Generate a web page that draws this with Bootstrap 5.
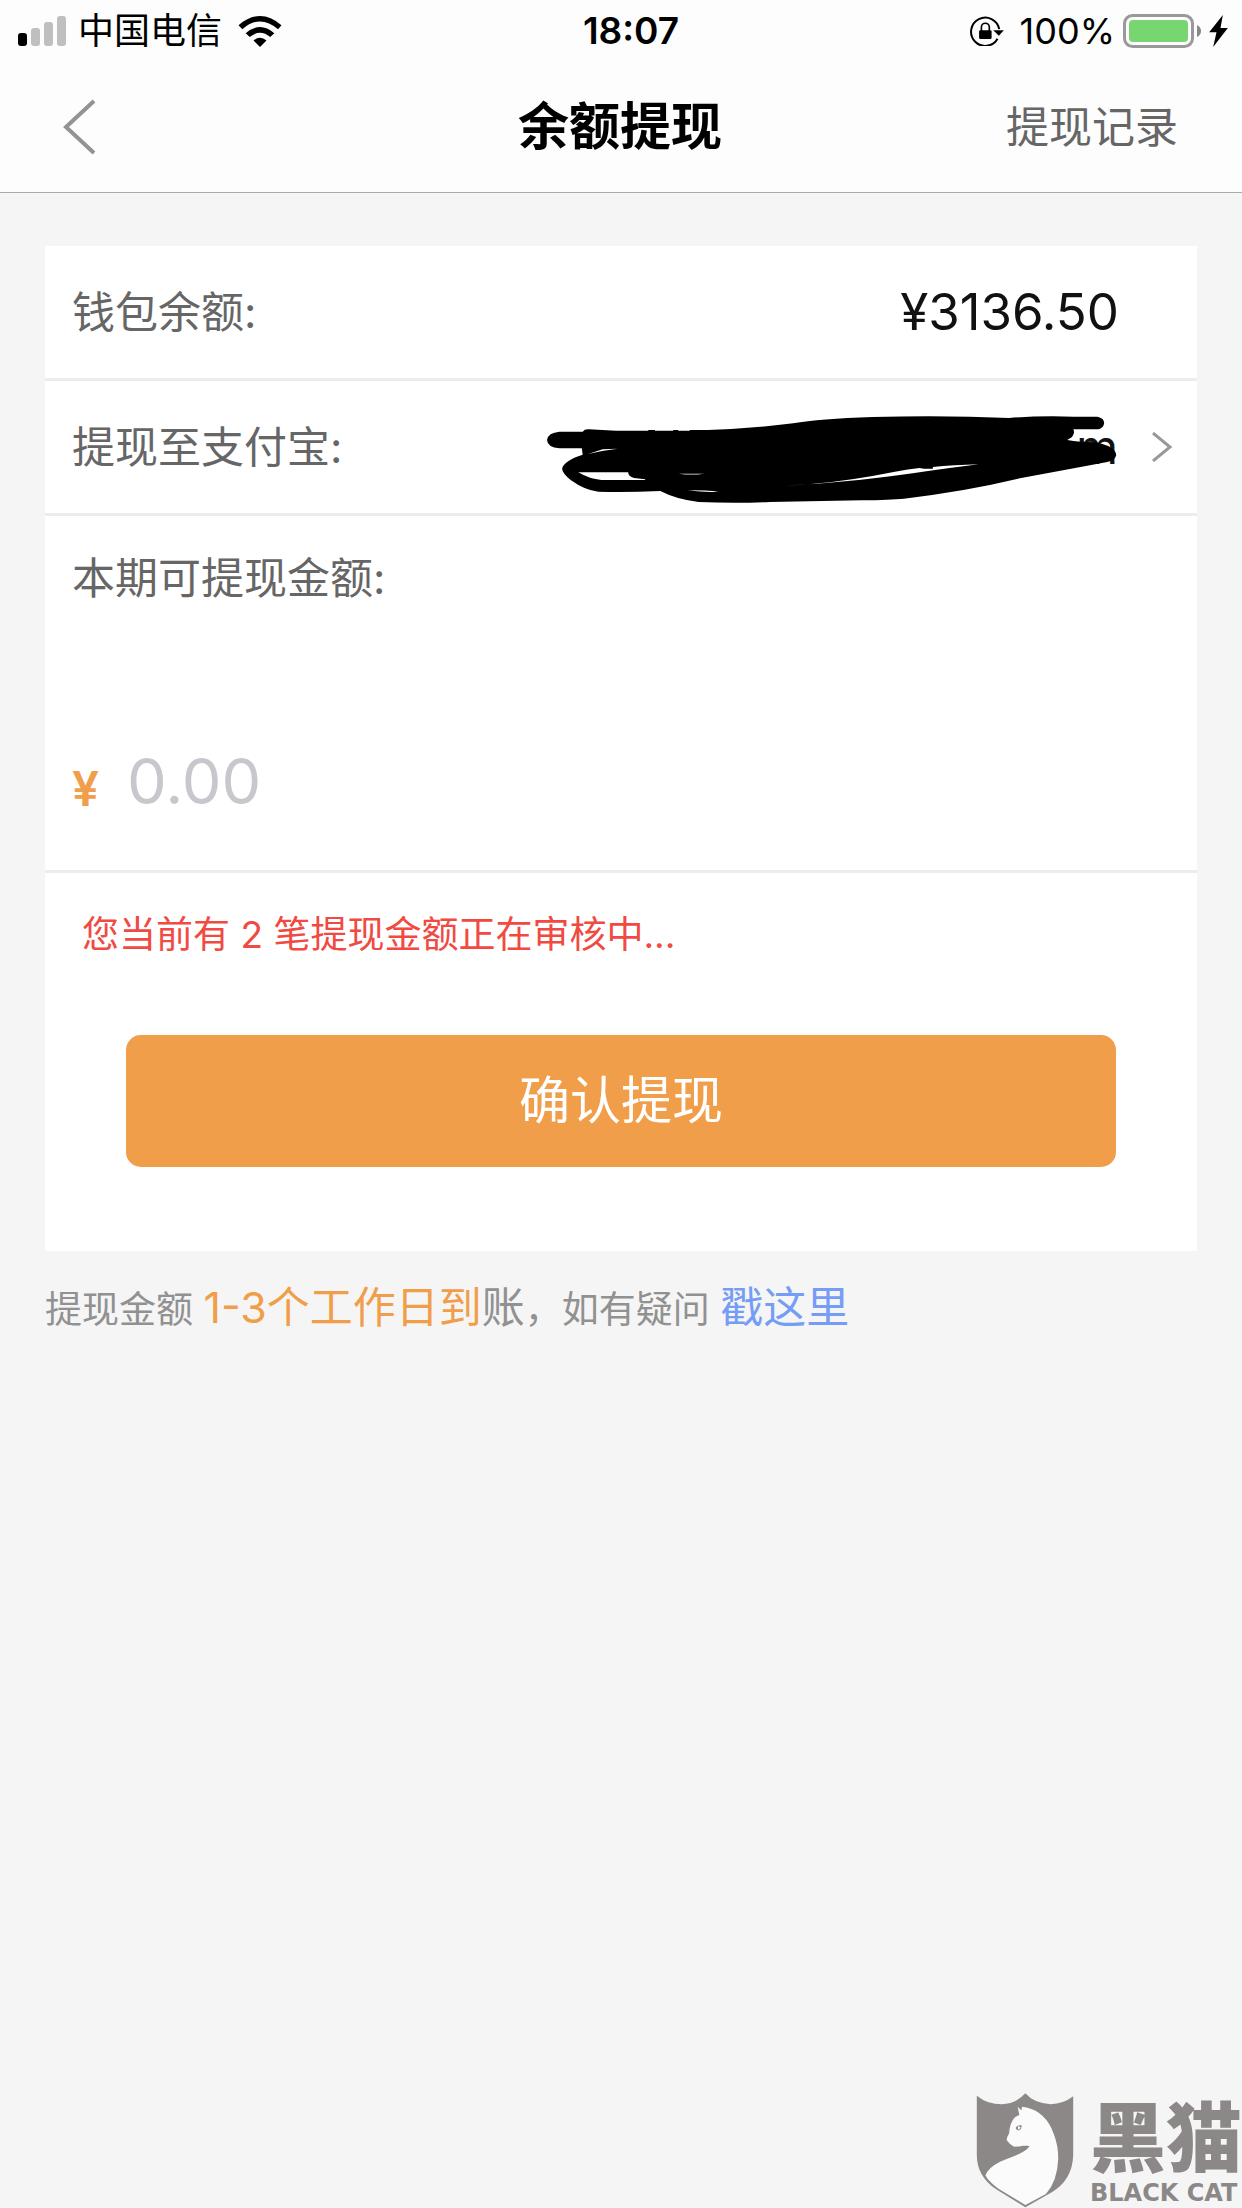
<!DOCTYPE html>
<html lang="zh-CN">
<head>
<meta charset="utf-8">
<meta name="viewport" content="width=device-width, initial-scale=1">
<title>余额提现</title>
<link href="https://cdn.jsdelivr.net/npm/bootstrap@5.3.0/dist/css/bootstrap.min.css" rel="stylesheet">
<style>
  body { font-family: Inter, "Noto Sans CJK SC", sans-serif; font-size: 43px; line-height: 60px; color: #666; background: #f5f5f5; }
  svg { display: block; flex: none; }
  a { text-decoration: none; }
  .app-head { background: #fdfdfd; border-bottom: 1px solid #aaa; }
  .status-bar { height: 62px; padding: 0 14px 0 18px; font-size: 36px; color: #000; }
  .clock { font-size: 37px; font-weight: 600; }
  .title-bar { height: 130px; padding: 0 64px 0 62px; }
  .side { flex: 1 1 0; }
  .page-title { font-size: 51px; font-weight: 600; color: #000; }
  .link-grey, .link-grey:hover { color: #666; }
  .page-main { padding: 53px 45px 0; }
  .line-item { min-height: 135px; padding: 0 24px 0 27px; border-bottom: 3px solid #ececec; }
  .sum { font-size: 51px; color: #111; padding-right: 54px; }
  .account { font-size: 48px; color: #111; padding-right: 33px; }
  .scribble { position: absolute; right: 79px; top: 34px; }
  .amount-block { padding: 32px 27px 47px; border-bottom: 3px solid #ececec; }
  .amount-line { margin-top: 131px; }
  .yen { font-size: 48px; font-weight: 600; color: #f19e4b; }
  .amount-input { font-size: 63px; line-height: 84px; height: 84px; padding: 0 0 0 4px; border: 0; background: transparent; color: #111; }
  .amount-input::placeholder { color: #c7c7cd; opacity: 1; }
  .confirm-block { padding: 32px 81px 84px; }
  .notice { font-size: 37px; color: #f04a42; margin: 0 0 70px -44px; }
  .btn-confirm, .btn-confirm:hover { height: 132px; border: 0; border-radius: 15px; background: #f19e4b; color: #fff; font-size: 51px; }
  .hint { font-size: 37px; color: #919191; margin: 26px 0 0; }
  .hint-big { font-size: 43px; }
  .orange { color: #f19e4b; }
  .hint a { color: #769df6; }
  .brand { gap: 16px; color: #8c8888; }
  .brand-cn { font-size: 76px; line-height: 84px; font-weight: 900; }
  .brand-en { font-family: "DejaVu Sans", sans-serif; font-size: 24px; line-height: 26px; font-weight: 700; padding-bottom: 2px; }
</style>
</head>
<body class="d-flex flex-column min-vh-100">
<header class="app-head">
  <div class="status-bar d-flex align-items-center">
    <div class="side d-flex align-items-center">
      <svg width="48" height="30" viewBox="0 0 48 30" aria-hidden="true"><rect y="17" width="9" height="13" rx="3"/><g fill="#bfbfbf"><rect x="13" y="12" width="9" height="18" rx="3"/><rect x="26" y="6" width="9" height="24" rx="3"/><rect x="39" width="9" height="30" rx="3"/></g></svg>
      <span class="ms-2 ps-1">中国电信</span>
      <svg class="ms-3" width="44" height="31" viewBox="720 44 126 91" aria-hidden="true"><path d="M720 71Q783 17 846 71L836 83Q783 37 731 83Z"/><path d="M741 95Q783 58 825 95L813 106Q783 81 753 106Z"/><path d="M764 116Q783 100 802 116L783 135Z"/></svg>
    </div>
    <span class="clock ps-3">18:07</span>
    <div class="side d-flex align-items-center justify-content-end">
      <svg width="34" height="30" viewBox="143 44 102 91" aria-hidden="true"><path d="M226 113A43 43 0 1 1 231 84" fill="none" stroke="#000" stroke-width="6"/><path d="M213 87H245L230 104Z"/><rect x="170" y="87" width="38" height="27" rx="4"/><path d="M177 90V78a12 12 0 0 1 24 0V90" fill="none" stroke="#000" stroke-width="5"/></svg>
      <span class="ms-3">100%</span>
      <svg class="ms-2" width="78" height="34" viewBox="0 0 78 34" aria-hidden="true"><rect x="1.500" y="1.500" width="68" height="31" rx="8" fill="none" stroke="#999" stroke-width="3"/><rect x="6" y="6" width="59" height="22" rx="4" fill="#78d672"/><path d="M74 11q4 2 4 6t-4 6z" fill="#888"/></svg>
      <svg class="ms-2" width="19" height="32" viewBox="866 44 56 96" aria-hidden="true"><path d="M907 44L866 96H888L878 140L922 83H900Z"/></svg>
    </div>
  </div>
  <nav class="title-bar d-flex align-items-center" aria-label="页面导航">
    <div class="side d-flex"><a href="#" class="d-block" aria-label="返回"><svg width="34" height="56" viewBox="0 0 34 56" fill="none" stroke="#939393" stroke-width="4"><path d="M32 2L4 28L32 54"/></svg></a></div>
    <h1 class="page-title m-0">余额提现</h1>
    <div class="side text-end"><a href="#" class="link-grey">提现记录</a></div>
  </nav>
</header>

<main class="page-main">
  <form class="bg-white" onsubmit="return false">
    <div class="line-item d-flex align-items-center justify-content-between"><span>钱包余额:</span><span class="sum">¥3136.50</span></div>
    <a href="#" class="line-item link-grey position-relative d-flex align-items-center">
      <span class="me-auto">提现至支付宝:</span>
      <span class="account">m</span>
      <svg width="22" height="30" viewBox="0 0 22 30" fill="none" stroke="#999" stroke-width="3" aria-hidden="true"><path d="M2 1L19 15L2 29"/></svg>
      <svg class="scribble" width="571" height="89" viewBox="60 75 1280 267" preserveAspectRatio="none" aria-hidden="true"><path fill-rule="evenodd" d="M88 125H140Q144 117 154 118L215 122H287V120H302V122H343V120H354V122H380V120H420Q520 116 612 100Q670 86 790 81Q950 75 1096 84Q1160 77 1240 80H1294Q1309 84 1309 100Q1307 115 1296 118H1240Q1246 138 1226 150Q1240 153 1256 155L1290 157Q1336 170 1336 196Q1333 212 1316 216Q1220 240 1120 265Q1000 304 860 326Q830 330 765 331L560 336Q480 341 400 336Q350 328 314 303Q240 307 175 305Q145 301 113 270Q93 248 94 235Q98 212 140 194L138 175H88Q61 172 60 150Q62 128 88 125ZM152 192L185 178L218 176Q185 181 152 192ZM130 247H242Q242 260 255 264L280 268V270H182Q155 267 130 247ZM355 251Q385 256 412 251Q385 252 355 251ZM376 301Q420 308 444 305Q420 301 376 301ZM590 287Q720 280 880 250Q960 234 1028 223Q970 225 925 231V236H905L895 234Q870 238 840 245Q740 272 648 283Z"/></svg>
    </a>
    <div class="amount-block">
      <label for="amount" class="d-block">本期可提现金额:</label>
      <div class="amount-line d-flex align-items-center gap-4"><span class="yen pt-3">¥</span><input id="amount" class="amount-input flex-grow-1" type="text" inputmode="decimal" placeholder="0.00"></div>
    </div>
    <div class="confirm-block">
      <p class="notice">您当前有 2 笔提现金额正在审核中...</p>
      <button type="submit" class="btn btn-confirm w-100">确认提现</button>
    </div>
  </form>
  <p class="hint">提现金额 <span class="hint-big"><span class="orange">1-3个工作日到</span>账</span>，如有疑问 <a href="#" class="hint-big">戳这里</a></p>
</main>

<footer class="brand d-flex justify-content-end align-items-end mt-auto">
  <svg width="98" height="115" viewBox="38 38 294 346" aria-hidden="true"><path fill="#8c8888" d="M40 46Q72 72 115 72Q158 70 186 39Q212 69 262 72Q300 71 330 48V225Q328 300 263 338L186 382L97 327Q40 287 40 225Z"/><path fill="#fbfbfb" d="M176 79L190 82Q248 96 271 160Q285 195 285 235Q283 302 248 342L186 375L104 325Q76 304 66 286Q74 263 110 245C145 229 180 222 199 198C180 194 165 201 151 199Q140 194 130 180Q129 173 137 160Q139 128 154 112Q160 107 168 104L163 79L174 91Z"/><path fill="#8c8888" d="M157 143q5-10 18-8q0 14-10 16q-5-1-8-8z"/><path fill="#fbfbfb" d="M164 137l8 5l-6 7l-2-5z"/></svg>
  <div class="d-flex flex-column">
    <span class="brand-cn">黑猫</span>
    <span class="brand-en">BLACK CAT</span>
  </div>
</footer>
<script src="https://cdn.jsdelivr.net/npm/bootstrap@5.3.0/dist/js/bootstrap.bundle.min.js"></script>
</body>
</html>
